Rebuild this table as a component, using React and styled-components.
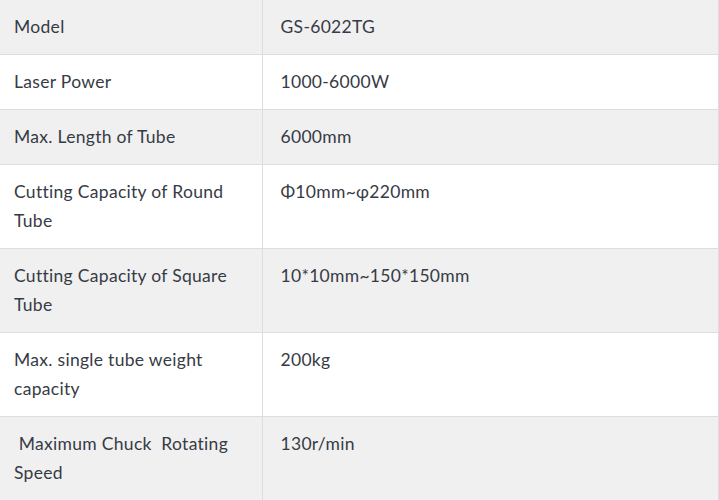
import styled, { createGlobalStyle } from "styled-components";

const GlobalStyle = createGlobalStyle`
  html, body {
    margin: 0;
    padding: 0;
    background: #ffffff;
  }
  body {
    font-family: Lato, "Open Sans", sans-serif;
  }
`;

const SpecTable = styled.table`
  width: 719px;
  border-collapse: collapse;
  table-layout: fixed;
  font-size: 17.5px;
  letter-spacing: 0.3px;
  color: #363b45;
`;

const Row = styled.tr`
  background: ${(p) => (p.$shade ? "#f0f0f0" : "#ffffff")};
  border-bottom: 1px solid #dddddd;
`;

const Cell = styled.td`
  box-sizing: border-box;
  width: ${(p) => (p.$label ? "262px" : "auto")};
  padding: 11.5px ${(p) => (p.$label ? "22px" : "14px")} 13.5px
    ${(p) => (p.$label ? "14px" : "18px")};
  line-height: 29px;
  vertical-align: top;
  border-right: 1px solid #dddddd;
  white-space: pre-wrap;
`;

const specs = [
  ["Model", "GS-6022TG"],
  ["Laser Power", "1000-6000W"],
  ["Max. Length of Tube", "6000mm"],
  ["Cutting Capacity of Round Tube", "Φ10mm~φ220mm"],
  ["Cutting Capacity of Square Tube", "10*10mm~150*150mm"],
  ["Max. single tube weight capacity", "200kg"],
  [" Maximum Chuck  Rotating Speed", "130r/min"],
];

export default function App() {
  return (
    <>
      <GlobalStyle />
      <SpecTable>
        <tbody>
          {specs.map(([label, value], i) => (
            <Row key={label} $shade={i % 2 === 0}>
              <Cell $label>{label}</Cell>
              <Cell>{value}</Cell>
            </Row>
          ))}
        </tbody>
      </SpecTable>
    </>
  );
}
